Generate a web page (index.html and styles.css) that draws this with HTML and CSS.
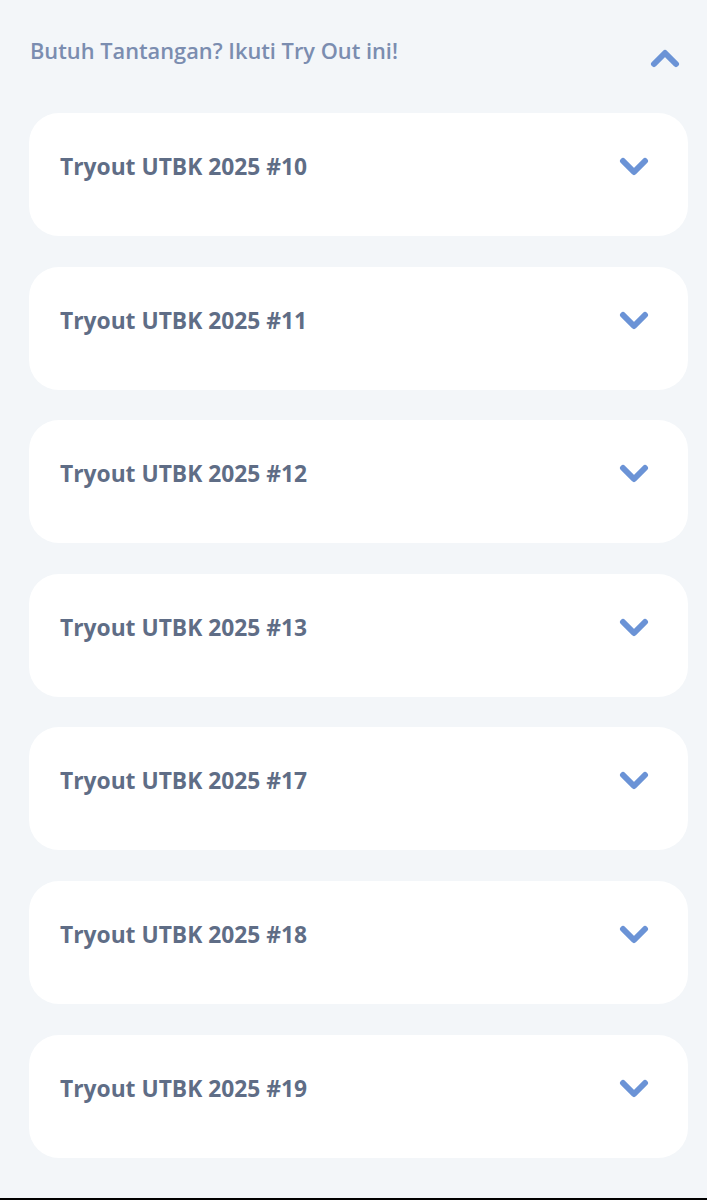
FILE: index.html
```html
<!DOCTYPE html>
<html lang="id">
<head>
<meta charset="utf-8">
<link rel="stylesheet" href="styles.css">
</head>
<body>
<div class="page">
  <div class="header">
    <h2 class="title">Butuh Tantangan? Ikuti Try Out ini!</h2>
    <svg class="chev up" width="30" height="20" viewBox="0 0 30 20"><path d="M4 16 L15 5 L26 16" fill="none" stroke="#6b93d6" stroke-width="6" stroke-linecap="round" stroke-linejoin="round"/></svg>
  </div>
  <div class="list">
    <div class="card"><span class="name">Tryout UTBK 2025 #10</span><svg class="chev" width="30" height="20" viewBox="0 0 30 20"><path d="M4 4 L15 15 L26 4" fill="none" stroke="#6b93d6" stroke-width="6" stroke-linecap="round" stroke-linejoin="round"/></svg></div>
    <div class="card"><span class="name">Tryout UTBK 2025 #11</span><svg class="chev" width="30" height="20" viewBox="0 0 30 20"><path d="M4 4 L15 15 L26 4" fill="none" stroke="#6b93d6" stroke-width="6" stroke-linecap="round" stroke-linejoin="round"/></svg></div>
    <div class="card"><span class="name">Tryout UTBK 2025 #12</span><svg class="chev" width="30" height="20" viewBox="0 0 30 20"><path d="M4 4 L15 15 L26 4" fill="none" stroke="#6b93d6" stroke-width="6" stroke-linecap="round" stroke-linejoin="round"/></svg></div>
    <div class="card"><span class="name">Tryout UTBK 2025 #13</span><svg class="chev" width="30" height="20" viewBox="0 0 30 20"><path d="M4 4 L15 15 L26 4" fill="none" stroke="#6b93d6" stroke-width="6" stroke-linecap="round" stroke-linejoin="round"/></svg></div>
    <div class="card"><span class="name">Tryout UTBK 2025 #17</span><svg class="chev" width="30" height="20" viewBox="0 0 30 20"><path d="M4 4 L15 15 L26 4" fill="none" stroke="#6b93d6" stroke-width="6" stroke-linecap="round" stroke-linejoin="round"/></svg></div>
    <div class="card"><span class="name">Tryout UTBK 2025 #18</span><svg class="chev" width="30" height="20" viewBox="0 0 30 20"><path d="M4 4 L15 15 L26 4" fill="none" stroke="#6b93d6" stroke-width="6" stroke-linecap="round" stroke-linejoin="round"/></svg></div>
    <div class="card"><span class="name">Tryout UTBK 2025 #19</span><svg class="chev" width="30" height="20" viewBox="0 0 30 20"><path d="M4 4 L15 15 L26 4" fill="none" stroke="#6b93d6" stroke-width="6" stroke-linecap="round" stroke-linejoin="round"/></svg></div>
  </div>
</div>
<div class="bottom-bar"></div>
</body>
</html>
```
FILE: styles.css
```css
html, body {
  margin: 0;
  padding: 0;
}
body {
  background: #f3f6f9;
  font-family: "Open Sans", "Noto Sans", sans-serif;
  height: 1200px;
  overflow: hidden;
  display: flex;
  flex-direction: column;
}
.page {
  flex: 1;
  padding: 0 19px 0 29px;
}
.header {
  display: flex;
  justify-content: space-between;
  align-items: flex-start;
  padding-top: 36px;
  height: 113px;
  box-sizing: border-box;
}
.title {
  margin: 0 0 0 1px;
  font-size: 21.8px;
  font-weight: 600;
  color: #7b8db0;
  line-height: 30px;
}
.chev.up {
  margin-top: 12px;
  margin-right: 8px;
}
.list {
  display: flex;
  flex-direction: column;
  gap: 30.6px;
}
.card {
  background: #ffffff;
  border-radius: 30px;
  height: 123px;
  box-sizing: border-box;
  display: flex;
  justify-content: space-between;
  align-items: flex-start;
  padding: 38px 39px 0 31px;
}
.name {
  font-size: 22.8px;
  font-weight: 700;
  color: #5f6d86;
  line-height: 32px;
}
.chev {
  display: block;
  margin-top: 6px;
}
.bottom-bar {
  height: 2px;
  background: #000;
}
```
